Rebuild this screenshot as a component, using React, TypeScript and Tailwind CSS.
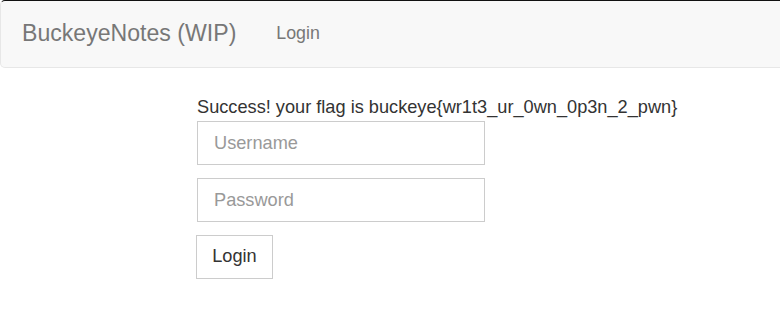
export default function App() {
  return (
    <div className="w-[780px] h-[330px] bg-white font-['Liberation_Sans',Arial,sans-serif] overflow-hidden">
      <nav className="flex items-center h-[68px] bg-[#f8f8f8] border border-[#e7e7e7] border-t-[#111] rounded-l-[5px] rounded-r-none w-[790px]">
        <span className="ml-[21px] text-[23.1px] text-[#777] leading-none">BuckeyeNotes (WIP)</span>
        <span className="ml-[40px] text-[17.8px] text-[#777] leading-none">Login</span>
      </nav>
      <div className="ml-[197px] mt-[25px] flex flex-col items-start">
        <p className="text-[18.2px] text-[#333] leading-[28px]">Success! your flag is buckeye{"{"}wr1t3_ur_0wn_0p3n_2_pwn{"}"}</p>
        <input
          type="text"
          placeholder="Username"
          className="w-[288px] h-[44px] border border-[#ccc] rounded-none px-[16px] text-[18.2px] text-[#555] placeholder:text-[#999] outline-none"
        />
        <input
          type="password"
          placeholder="Password"
          className="mt-[13px] w-[288px] h-[44px] border border-[#ccc] rounded-none px-[16px] text-[18.2px] text-[#555] placeholder:text-[#999] outline-none"
        />
        <button className="-ml-px mt-[13px] w-[77px] h-[44px] border border-[#ccc] bg-white text-[18.2px] text-[#333]">
          Login
        </button>
      </div>
    </div>
  );
}
